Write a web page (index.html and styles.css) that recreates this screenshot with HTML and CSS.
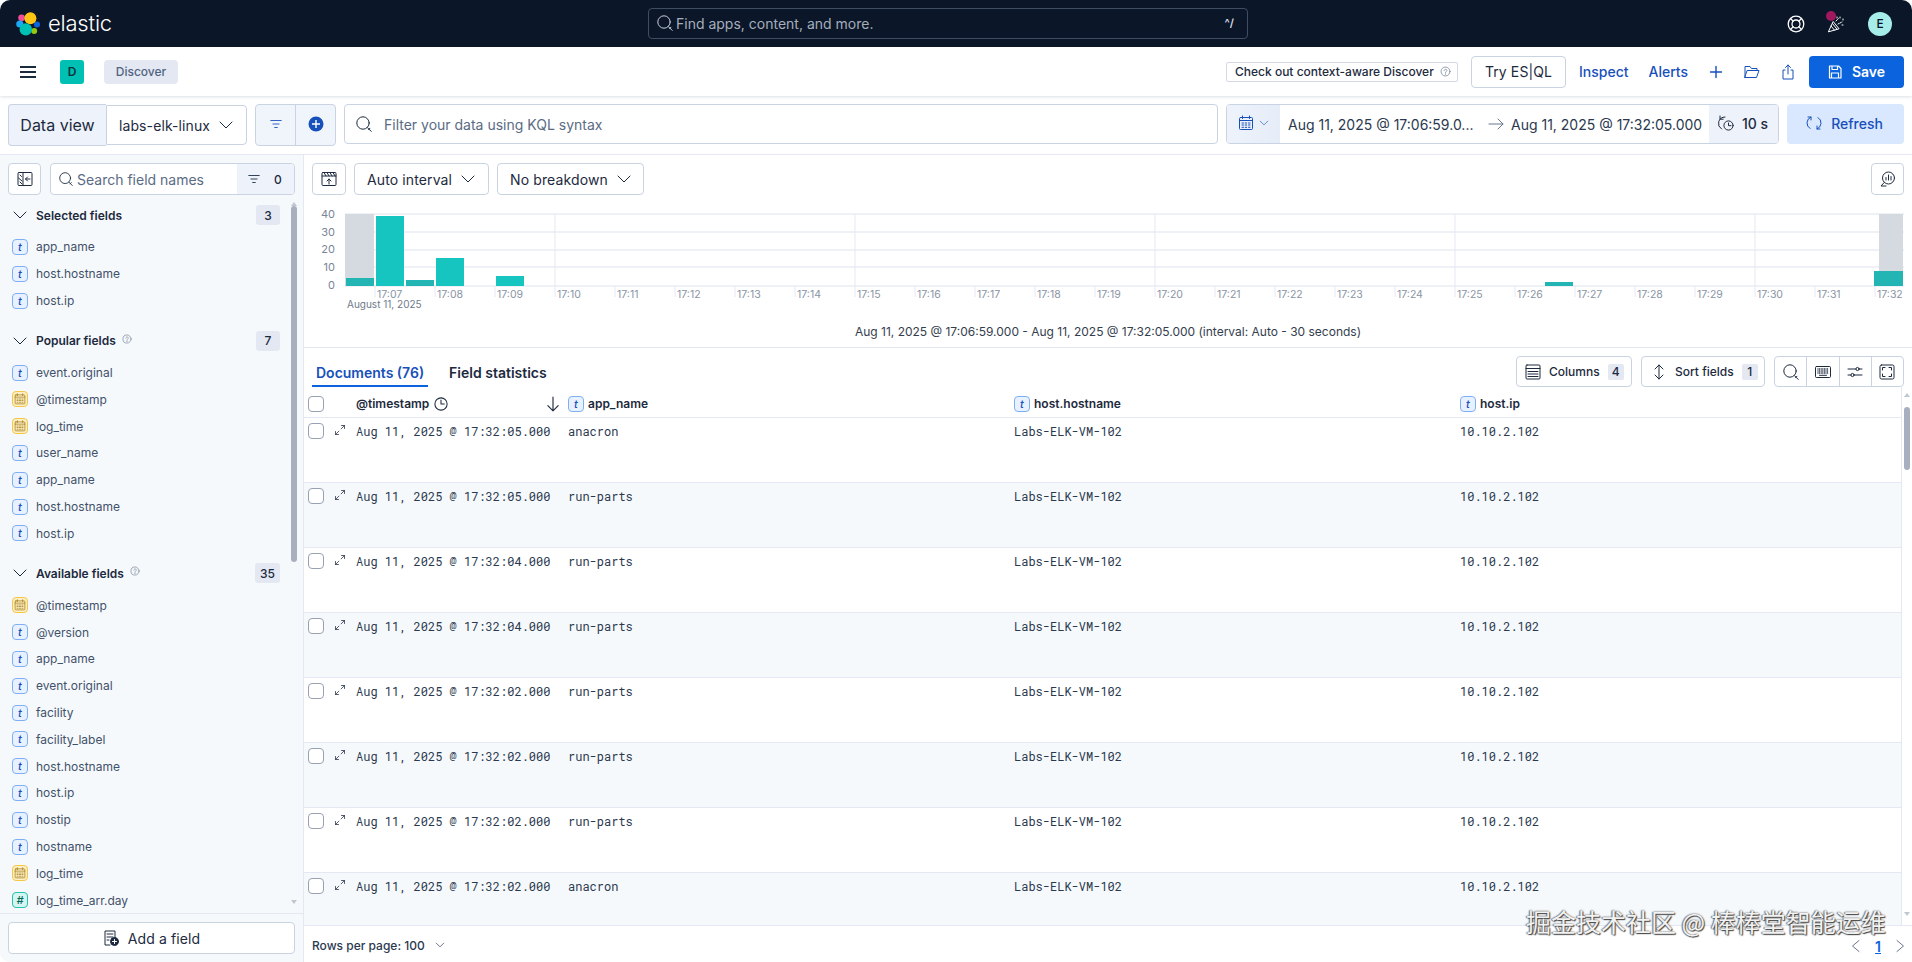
FILE: index.html
```html
<!DOCTYPE html>
<html lang="en">
<head>
<meta charset="utf-8">
<title>Discover - Elastic</title>
<link rel="stylesheet" href="styles.css">
</head>
<body>
<svg class="defs" width="0" height="0" aria-hidden="true">
  <defs>
    <symbol id="i-search" viewBox="0 0 16 16"><circle cx="7" cy="7" r="6.2"/><path d="M11.4 11.6l3.8 3.8M12.6 13.6l1.4-1.4"/></symbol>
    <symbol id="i-chev" viewBox="0 0 16 16"><path d="M2 5l6 6 6-6"/></symbol>
    <symbol id="i-filter" viewBox="0 0 16 16"><path d="M2 4h12M4.5 8h7M6.5 12h3"/></symbol>
    <symbol id="i-cal" viewBox="0 0 16 16"><rect x="1.5" y="2.5" width="13" height="12" rx="1"/><path d="M1.5 5.5h13M4.5 1v2.5M11.5 1v2.5M4 8h1.5M7.2 8h1.5M10.5 8h1.5M4 10h1.5M7.2 10h1.5M10.5 10h1.5M4 12.3h1.5M7.2 12.3h1.5M10.5 12.3h1.5"/></symbol>
    <symbol id="i-expand" viewBox="0 0 16 16"><path d="M9.5 6.5L14 2M10 2h4v4M6.5 9.5L2 14M2 10v4h4"/></symbol>
    <symbol id="i-help" viewBox="0 0 16 16"><circle cx="8" cy="8" r="6.5"/><path d="M6 6.5C6 4 10 4 10 6.5 10 8 8 8 8 9.7M8 11.2v1"/></symbol>
    <symbol id="i-clock" viewBox="0 0 16 16"><circle cx="8" cy="8" r="7"/><path d="M8 3.5V8h3.8"/></symbol>
    <symbol id="i-keyboard" viewBox="0 0 16 16"><rect x="0.5" y="2.5" width="15" height="11" rx="1"/><path d="M2.5 5h11M2.5 7h11M2.5 9h11" stroke-dasharray="1 0.6" stroke-linecap="butt" stroke-width="1.4"/><path d="M4.5 11.3h7"/></symbol>
  </defs>
</svg>
<div class="app">
  <header class="topbar">
    <div class="brand">
      <svg class="logo" viewBox="0 0 24 24" width="24" height="24" aria-hidden="true">
        <circle class="lg-pink" cx="5.6" cy="5.8" r="3.4"/>
        <circle class="lg-sky" cx="3.8" cy="12" r="3.6"/>
        <circle class="lg-blue" cx="21" cy="12.6" r="3"/>
        <circle class="lg-green" cx="18.2" cy="19" r="3"/>
        <circle class="lg-yellow" cx="14.4" cy="6.2" r="6"/>
        <circle class="lg-teal" cx="9.8" cy="17.4" r="6.2"/>
      </svg>
      <span class="wordmark">elastic</span>
    </div>
    <div class="global-search">
      <svg class="ic ic-16 ic-search-global"><use href="#i-search"/></svg>
      <span class="global-search-text">Find apps, content, and more.</span>
      <span class="shortcut">^/</span>
    </div>
    <div class="top-actions">
      <svg class="ic ic-18 ic-light ic-buoy" viewBox="0 0 18 18"><circle cx="9" cy="9" r="7.8"/><circle cx="9" cy="9" r="4"/><path d="M3.5 3.5l2.7 2.7M14.5 3.5l-2.7 2.7M3.5 14.5l2.7-2.7M14.5 14.5l-2.7-2.7"/></svg>
      <span class="party">
        <svg class="ic ic-18 ic-light" viewBox="0 0 18 18"><path d="M1.5 16.5L6.2 6.5l5.6 7z M4 11l3.5 4.2M5.5 8.5l4.3 5.5"/><path d="M9 6l3-3M11 9l4-2M13 2v1M16 4v1M15 10h1M10 2v1" stroke-dasharray="1.2 1"/></svg>
        <span class="party-dot"></span>
      </span>
      <span class="avatar">E</span>
    </div>
  </header>

  <nav class="appbar">
    <svg class="burger" viewBox="0 0 16 12" width="16" height="12"><path d="M0 1h16M0 6h16M0 11h16"/></svg>
    <span class="space-tile">D</span>
    <span class="crumb">Discover</span>
    <div class="appbar-right">
      <span class="aware-tag">Check out context-aware Discover<svg class="ic ic-11 ic-grey"><use href="#i-help"/></svg></span>
      <span class="btn-esql">Try ES|QL</span>
      <a class="nav-link nav-inspect">Inspect</a>
      <a class="nav-link nav-alerts">Alerts</a>
      <svg class="ic ic-14 ic-blue nav-plus" viewBox="0 0 14 14"><path d="M7 1.5v11M1.5 7h11"/></svg>
      <svg class="ic ic-16 ic-blue nav-folder" viewBox="0 0 16 16"><path d="M1 13.5V2.5h5l1.5 2H13v2M1 13.5h11.5l2.5-7H3.5z"/></svg>
      <svg class="ic ic-16 ic-blue nav-share" viewBox="0 0 16 16"><path d="M5 6H3v9h10V6h-2M8 10V1M5.5 3.5L8 1l2.5 2.5"/></svg>
      <span class="btn-save">
        <svg class="ic ic-14 ic-white" viewBox="0 0 14 14"><path d="M1.5 1h9l2.5 2.5V13H1.5zM4 1v3.5h5.5V1M3.5 13V8h7v5"/></svg>
        Save
      </span>
    </div>
  </nav>

  <div class="querybar">
    <div class="dv-group">
      <span class="dv-label">Data view</span>
      <span class="dv-select">labs-elk-linux<svg class="ic ic-16 ic-dark"><use href="#i-chev"/></svg></span>
    </div>
    <div class="filter-group">
      <span class="fg-cell"><svg class="ic ic-14 ic-blue"><use href="#i-filter"/></svg></span>
      <span class="fg-cell"><svg class="ic-plus" viewBox="0 0 16 16" width="16" height="16"><circle cx="8" cy="8" r="7.5"/><path d="M8 4v8M4 8h8"/></svg></span>
    </div>
    <div class="kql">
      <svg class="ic ic-16 ic-dark"><use href="#i-search"/></svg>
      <span class="kql-text">Filter your data using KQL syntax</span>
    </div>
    <div class="date-group">
      <span class="date-cal">
        <svg class="ic ic-16 ic-blue"><use href="#i-cal"/></svg>
        <svg class="ic ic-10 ic-blue"><use href="#i-chev"/></svg>
      </span>
      <span class="date-range">
        <span class="date-start">Aug 11, 2025 @ 17:06:59.0...</span>
        <svg class="ic ic-16 ic-grey date-arrow" viewBox="0 0 16 16"><path d="M1 8h14M10 3l5 5-5 5"/></svg>
        <span class="date-end">Aug 11, 2025 @ 17:32:05.000</span>
      </span>
      <span class="date-refresh">
        <svg class="ic ic-16 ic-dark" viewBox="0 0 16 16"><path d="M7 2A6.5 6.5 0 0 0 3.5 14M2 1v3.2h3.2"/><circle cx="10.5" cy="10.5" r="4.6"/><path d="M10.5 8v2.7h2.5"/></svg>
        10 s
      </span>
    </div>
    <span class="btn-refresh">
      <svg class="ic ic-16 ic-blue" viewBox="0 0 16 16"><path d="M12 2.5A6.5 6.5 0 0 1 11 14M4 13.5A6.5 6.5 0 0 1 5 2M5 5V2H2M11 11v3h3"/></svg>
      Refresh
    </span>
  </div>

  <div class="workspace">
    <aside class="sidebar">
      <div class="side-top">
        <span class="icon-btn icon-btn-side">
          <svg class="ic ic-16 ic-dark" viewBox="0 0 16 16"><rect x="1" y="1.5" width="14" height="13" rx="1"/><path d="M6 1.5v13M3 4l1.5 1.5M1.5 7L5 10M3 11l2 2M13 8H8.5M10.5 6l-2 2 2 2"/></svg>
        </span>
        <div class="side-search">
          <span class="side-search-main">
            <svg class="ic ic-14 ic-dark"><use href="#i-search"/></svg>
            <span class="side-search-text">Search field names</span>
          </span>
          <span class="side-search-filter">
            <svg class="ic ic-14 ic-dark"><use href="#i-filter"/></svg>
            <span class="count-mini">0</span>
          </span>
        </div>
      </div>
      <div class="field-list">
        <div class="section-head section-first"><svg class="ic ic-16 ic-dark"><use href="#i-chev"/></svg><span class="section-title">Selected fields</span><span class="badge">3</span></div>
        <div class="field"><span class="tok tok-t">t</span>app_name</div>
        <div class="field"><span class="tok tok-t">t</span>host.hostname</div>
        <div class="field"><span class="tok tok-t">t</span>host.ip</div>

        <div class="section-head"><svg class="ic ic-16 ic-dark"><use href="#i-chev"/></svg><span class="section-title">Popular fields</span><svg class="ic ic-10 ic-grey sec-help"><use href="#i-help"/></svg><span class="badge">7</span></div>
        <div class="field"><span class="tok tok-t">t</span>event.original</div>
        <div class="field"><span class="tok tok-d"><svg class="ic ic-12 ic-date"><use href="#i-cal"/></svg></span>@timestamp</div>
        <div class="field"><span class="tok tok-d"><svg class="ic ic-12 ic-date"><use href="#i-cal"/></svg></span>log_time</div>
        <div class="field"><span class="tok tok-t">t</span>user_name</div>
        <div class="field"><span class="tok tok-t">t</span>app_name</div>
        <div class="field"><span class="tok tok-t">t</span>host.hostname</div>
        <div class="field"><span class="tok tok-t">t</span>host.ip</div>

        <div class="section-head"><svg class="ic ic-16 ic-dark"><use href="#i-chev"/></svg><span class="section-title">Available fields</span><svg class="ic ic-10 ic-grey sec-help"><use href="#i-help"/></svg><span class="badge">35</span></div>
        <div class="field"><span class="tok tok-d"><svg class="ic ic-12 ic-date"><use href="#i-cal"/></svg></span>@timestamp</div>
        <div class="field"><span class="tok tok-t">t</span>@version</div>
        <div class="field"><span class="tok tok-t">t</span>app_name</div>
        <div class="field"><span class="tok tok-t">t</span>event.original</div>
        <div class="field"><span class="tok tok-t">t</span>facility</div>
        <div class="field"><span class="tok tok-t">t</span>facility_label</div>
        <div class="field"><span class="tok tok-t">t</span>host.hostname</div>
        <div class="field"><span class="tok tok-t">t</span>host.ip</div>
        <div class="field"><span class="tok tok-t">t</span>hostip</div>
        <div class="field"><span class="tok tok-t">t</span>hostname</div>
        <div class="field"><span class="tok tok-d"><svg class="ic ic-12 ic-date"><use href="#i-cal"/></svg></span>log_time</div>
        <div class="field"><span class="tok tok-n">#</span>log_time_arr.day</div>
        <span class="side-arrow-up"></span>
        <span class="side-thumb"></span>
        <span class="side-arrow-down"></span>
      </div>
      <div class="side-foot">
        <span class="btn-add">
          <svg class="ic ic-16 ic-dark" viewBox="0 0 16 16"><path d="M7 15H2V1h10v7M4 4h6M4 7h6M4 10h2"/><circle class="add-dot" cx="11.5" cy="11.5" r="4"/><path class="add-plus" d="M11.5 9.5v4M9.5 11.5h4"/></svg>
          Add a field
        </span>
      </div>
    </aside>

    <main class="content">
      <div class="chart-tools">
        <span class="icon-btn icon-btn-chart">
          <svg class="ic ic-16 ic-dark" viewBox="0 0 16 16"><rect x="1" y="1.5" width="14" height="13" rx="1"/><path d="M1 5h14M3 1.5L5 5M6 1.5L8 5M9 1.5L11 5M12 1.5L14 5M8 13V8M6 10l2-2 2 2"/></svg>
        </span>
        <span class="select-btn select-interval">Auto interval<svg class="ic ic-16 ic-dark"><use href="#i-chev"/></svg></span>
        <span class="select-btn select-breakdown">No breakdown<svg class="ic ic-16 ic-dark"><use href="#i-chev"/></svg></span>
        <span class="icon-btn icon-btn-ai">
          <svg class="ic ic-16 ic-dark" viewBox="0 0 16 16"><circle cx="8.5" cy="7" r="6"/><path d="M4.2 11.5L1 15h5M6 9V6.5M8.5 9V4M11 9V5.5"/></svg>
        </span>
      </div>

      <svg class="chart" viewBox="304 200 1608 118" width="1608" height="118" role="img" aria-label="Histogram of documents over time">
        <g class="grid-h">
          <path d="M345 214H1904M345 232H1904M345 250H1904M345 267H1904M345 286H1904"/>
        </g>
        <g class="grid-v">
          <path d="M555 214V286M855 214V286M1155 214V286M1455 214V286M1755 214V286"/>
        </g>
        <g class="tick">
          <path d="M375 286v11M435 286v11M495 286v11M555 286v11M615 286v11M675 286v11M735 286v11M795 286v11M855 286v11M915 286v11M975 286v11M1035 286v11M1095 286v11M1155 286v11M1215 286v11M1275 286v11M1335 286v11M1395 286v11M1455 286v11M1515 286v11M1575 286v11M1635 286v11M1695 286v11M1755 286v11M1815 286v11M1875 286v11"/>
        </g>
        <rect class="bar-shade" x="345" y="214" width="29" height="72"/>
        <rect class="bar-shade" x="1879" y="214" width="24" height="72"/>
        <rect class="bar-dim" x="346" y="278" width="28" height="8"/>
        <rect class="bar" x="376" y="216" width="28" height="70"/>
        <rect class="bar-dim" x="406" y="280" width="28" height="6"/>
        <rect class="bar" x="436" y="258" width="28" height="28"/>
        <rect class="bar" x="496" y="276" width="28" height="10"/>
        <rect class="bar-dim" x="1545" y="282" width="28" height="4"/>
        <rect class="bar-dim" x="1874" y="271" width="29" height="15"/>
        <g class="y-labels">
          <text x="335" y="218">40</text>
          <text x="335" y="236">30</text>
          <text x="335" y="253">20</text>
          <text x="335" y="271">10</text>
          <text x="335" y="289">0</text>
        </g>
        <g class="x-labels">
          <text x="377" y="298">17:07</text><text x="437" y="298">17:08</text><text x="497" y="298">17:09</text><text x="557" y="298">17:10</text><text x="617" y="298">17:11</text><text x="677" y="298">17:12</text><text x="737" y="298">17:13</text><text x="797" y="298">17:14</text><text x="857" y="298">17:15</text><text x="917" y="298">17:16</text><text x="977" y="298">17:17</text><text x="1037" y="298">17:18</text><text x="1097" y="298">17:19</text><text x="1157" y="298">17:20</text><text x="1217" y="298">17:21</text><text x="1277" y="298">17:22</text><text x="1337" y="298">17:23</text><text x="1397" y="298">17:24</text><text x="1457" y="298">17:25</text><text x="1517" y="298">17:26</text><text x="1577" y="298">17:27</text><text x="1637" y="298">17:28</text><text x="1697" y="298">17:29</text><text x="1757" y="298">17:30</text><text x="1817" y="298">17:31</text><text x="1877" y="298">17:32</text>
          <text class="x-date" x="347" y="308">August 11, 2025</text>
        </g>
      </svg>
      <div class="chart-caption">Aug 11, 2025 @ 17:06:59.000 - Aug 11, 2025 @ 17:32:05.000 (interval: Auto - 30 seconds)</div>

      <div class="tabs-row">
        <span class="tab tab-active">Documents (76)</span>
        <span class="tab">Field statistics</span>
        <div class="grid-tools">
          <span class="tool-btn tool-columns">
            <svg class="ic ic-16 ic-dark" viewBox="0 0 16 16"><rect x="1" y="1" width="14" height="14" rx="1"/><path d="M1 4.5h14M3 7.5h10M3 10h10M3 12.5h10" /></svg>
            Columns<span class="tool-count">4</span>
          </span>
          <span class="tool-btn tool-sort">
            <svg class="ic ic-16 ic-dark" viewBox="0 0 16 16"><path d="M8 1v14M4 5l4-4 4 4M4 11l4 4 4-4"/></svg>
            Sort fields<span class="tool-count">1</span>
          </span>
          <div class="tool-group">
            <span class="tool-cell"><svg class="ic ic-16 ic-dark"><use href="#i-search"/></svg></span>
            <span class="tool-cell"><svg class="ic ic-16 ic-dark"><use href="#i-keyboard"/></svg></span>
            <span class="tool-cell"><svg class="ic ic-16 ic-dark" viewBox="0 0 16 16"><path d="M1 5h8M12 5h3M1 11h3M7 11h8"/><circle cx="10.5" cy="5" r="1.6"/><circle cx="5.5" cy="11" r="1.6"/></svg></span>
            <span class="tool-cell"><svg class="ic ic-16 ic-dark" viewBox="0 0 16 16"><rect x="1" y="1" width="14" height="14" rx="1.5"/><path d="M3.5 6V3.5H6M10 3.5h2.5V6M12.5 10v2.5H10M6 12.5H3.5V10"/></svg></span>
          </div>
        </div>
      </div>

      <div class="table">
        <div class="row row-head">
          <span class="cell-check"><span class="check"></span></span>
          <span></span>
          <span class="th th-time">@timestamp<svg class="ic ic-14 ic-dark ic-clock"><use href="#i-clock"/></svg><svg class="ic ic-16 ic-dark th-sort" viewBox="0 0 14 14"><path d="M7 1v12M2.5 8.5L7 13l4.5-4.5"/></svg></span>
          <span class="th"><span class="tok tok-t">t</span>app_name</span>
          <span class="th"><span class="tok tok-t">t</span>host.hostname</span>
          <span class="th"><span class="tok tok-t">t</span>host.ip</span>
        </div>
        <div class="row">
          <span class="cell-check"><span class="check"></span></span><span class="cell-exp"><svg class="ic ic-12 ic-dark"><use href="#i-expand"/></svg></span>
          <span class="td">Aug 11, 2025 @ 17:32:05.000</span><span class="td">anacron</span><span class="td">Labs-ELK-VM-102</span><span class="td">10.10.2.102</span>
        </div>
        <div class="row row-alt">
          <span class="cell-check"><span class="check"></span></span><span class="cell-exp"><svg class="ic ic-12 ic-dark"><use href="#i-expand"/></svg></span>
          <span class="td">Aug 11, 2025 @ 17:32:05.000</span><span class="td">run-parts</span><span class="td">Labs-ELK-VM-102</span><span class="td">10.10.2.102</span>
        </div>
        <div class="row">
          <span class="cell-check"><span class="check"></span></span><span class="cell-exp"><svg class="ic ic-12 ic-dark"><use href="#i-expand"/></svg></span>
          <span class="td">Aug 11, 2025 @ 17:32:04.000</span><span class="td">run-parts</span><span class="td">Labs-ELK-VM-102</span><span class="td">10.10.2.102</span>
        </div>
        <div class="row row-alt">
          <span class="cell-check"><span class="check"></span></span><span class="cell-exp"><svg class="ic ic-12 ic-dark"><use href="#i-expand"/></svg></span>
          <span class="td">Aug 11, 2025 @ 17:32:04.000</span><span class="td">run-parts</span><span class="td">Labs-ELK-VM-102</span><span class="td">10.10.2.102</span>
        </div>
        <div class="row">
          <span class="cell-check"><span class="check"></span></span><span class="cell-exp"><svg class="ic ic-12 ic-dark"><use href="#i-expand"/></svg></span>
          <span class="td">Aug 11, 2025 @ 17:32:02.000</span><span class="td">run-parts</span><span class="td">Labs-ELK-VM-102</span><span class="td">10.10.2.102</span>
        </div>
        <div class="row row-alt">
          <span class="cell-check"><span class="check"></span></span><span class="cell-exp"><svg class="ic ic-12 ic-dark"><use href="#i-expand"/></svg></span>
          <span class="td">Aug 11, 2025 @ 17:32:02.000</span><span class="td">run-parts</span><span class="td">Labs-ELK-VM-102</span><span class="td">10.10.2.102</span>
        </div>
        <div class="row">
          <span class="cell-check"><span class="check"></span></span><span class="cell-exp"><svg class="ic ic-12 ic-dark"><use href="#i-expand"/></svg></span>
          <span class="td">Aug 11, 2025 @ 17:32:02.000</span><span class="td">run-parts</span><span class="td">Labs-ELK-VM-102</span><span class="td">10.10.2.102</span>
        </div>
        <div class="row row-alt">
          <span class="cell-check"><span class="check"></span></span><span class="cell-exp"><svg class="ic ic-12 ic-dark"><use href="#i-expand"/></svg></span>
          <span class="td">Aug 11, 2025 @ 17:32:02.000</span><span class="td">anacron</span><span class="td">Labs-ELK-VM-102</span><span class="td">10.10.2.102</span>
        </div>
        <span class="tbl-arrow-up"></span>
        <span class="tbl-thumb"></span>
        <span class="tbl-arrow-down"></span>
      </div>

      <div class="pager">
        <span class="rows-per">Rows per page: 100<svg class="ic ic-10 ic-dark"><use href="#i-chev"/></svg></span>
        <span class="pages">
          <svg class="ic ic-14 ic-grey" viewBox="0 0 14 14"><path d="M10 1.5L3.5 7l6.5 5.5"/></svg>
          <a class="page-num">1</a>
          <svg class="ic ic-14 ic-grey" viewBox="0 0 14 14"><path d="M4 1.5L10.5 7 4 12.5"/></svg>
        </span>
      </div>
    </main>
  </div>
  <div class="watermark">掘金技术社区 @ 棒棒堂智能运维</div>
</div>
</body>
</html>
```
FILE: styles.css
```css
* { box-sizing: border-box; }
html, body { margin: 0; padding: 0; height: 100%; background: #fff; overflow: hidden; }
body { font-family: Inter, "Noto Sans", sans-serif; color: #1d2a3e; font-size: 14px; }
.defs { position: absolute; }
.app { position: relative; width: 1912px; height: 962px; display: flex; flex-direction: column; overflow: hidden; border-radius: 10px; background: #fff; }

.ic { fill: none; stroke: currentColor; stroke-width: 1; flex: none; stroke-linecap: round; stroke-linejoin: round; }
.ic-10 { width: 10px; height: 10px; }
.ic-11 { width: 11px; height: 11px; }
.ic-12 { width: 12px; height: 12px; }
.ic-14 { width: 14px; height: 14px; }
.ic-16 { width: 16px; height: 16px; }
.ic-18 { width: 18px; height: 18px; }
.ic-dark { color: #1d2a3e; }
.ic-grey { color: #69768c; }
.ic-blue { color: #1750ba; }
.ic-white { color: #fff; stroke-width: 1.2; }
.ic-light { color: #fff; }
.ic-date { color: #a37a12; }

/* top bar */
.topbar { height: 47px; flex: none; background: #0b1628; display: flex; align-items: center; position: relative; }
.brand { width: 648px; flex: none; display: flex; align-items: center; gap: 8px; padding-left: 16px; }
.logo .lg-pink { fill: #f04e98; }
.logo .lg-sky { fill: #1ba9f5; }
.logo .lg-blue { fill: #0b64dd; }
.logo .lg-green { fill: #93c90e; }
.logo .lg-yellow { fill: #fec514; }
.logo .lg-teal { fill: #00bfb3; }
.wordmark { color: #fff; font-size: 22px; font-weight: 300; letter-spacing: -0.2px; line-height: 24px; margin-top: -1px; }
.global-search { width: 600px; height: 31px; margin-top: -1px; border: 1px solid #3f4d63; border-radius: 4px; display: flex; align-items: center; padding: 0 8px; gap: 3px; color: #b0b9c7; }
.global-search-text { font-size: 14px; flex: 1; color: #a4aebd; }
.ic-search-global { color: #c9d1dc; }
.shortcut { font-size: 11px; color: #d6dbe3; font-weight: 600; padding-right: 5px; }
.top-actions { flex: 1; display: flex; align-items: center; justify-content: flex-end; padding-right: 20px; }
.ic-buoy { margin-right: 22px; stroke-width: 1.3; }
.party { position: relative; display: inline-flex; margin-right: 23px; }
.party-dot { position: absolute; left: -1px; top: -4px; width: 10px; height: 10px; border-radius: 50%; background: #a0195f; }
.avatar { width: 24px; height: 24px; border-radius: 50%; background: #a6edea; color: #07101f; font-size: 12px; font-weight: 500; display: flex; align-items: center; justify-content: center; }

/* app bar */
.appbar { height: 49px; flex: none; display: flex; align-items: center; background: #fff; box-shadow: 0 1px 3px rgba(40,60,90,.16); position: relative; z-index: 2; padding-left: 20px; }
.burger { fill: none; stroke: #1d2a3e; stroke-width: 2; flex: none; }
.space-tile { width: 24px; height: 24px; margin-left: 24px; border-radius: 3px; background: #00bfb3; color: #07323a; font-size: 12px; font-weight: 600; display: flex; align-items: center; justify-content: center; }
.crumb { margin-left: 20px; height: 24px; width: 74px; border-radius: 4px; background: #e3e8f2; color: #516381; font-size: 12px; font-weight: 500; display: flex; align-items: center; justify-content: center; }
.appbar-right { margin-left: auto; display: flex; align-items: center; padding-right: 8px; }
.aware-tag { width: 232px; height: 20px; border: 1px solid #d3dae6; border-radius: 2px; font-size: 12px; font-weight: 500; color: #1d2a3e; display: flex; align-items: center; padding-left: 8px; gap: 6px; white-space: nowrap; }
.btn-esql { width: 95px; height: 32px; margin-left: 13px; border: 1px solid #cad3e2; border-radius: 4px; font-size: 14px; font-weight: 400; letter-spacing: .1px; display: flex; align-items: center; justify-content: center; }
.nav-link { color: #1750ba; font-size: 14px; font-weight: 500; }
.nav-inspect { margin-left: 13px; }
.nav-alerts { margin-left: 20px; }
.nav-plus { margin-left: 21px; stroke-width: 1.4; }
.nav-folder { margin-left: 21px; }
.nav-share { margin-left: 20px; }
.btn-save { width: 95px; height: 32px; margin-left: 13px; border-radius: 4px; background: #0b64dd; color: #fff; font-size: 14px; font-weight: 600; display: flex; align-items: center; justify-content: center; gap: 10px; }

/* query bar */
.querybar { height: 59px; flex: none; padding: 8px 8px 0; display: flex; align-items: flex-start; border-bottom: 1px solid #e3e8f2; background: #fff; }
.dv-group { display: flex; align-items: center; height: 42px; }
.dv-label { width: 98px; height: 42px; background: #eef3fb; border: 1px solid #cad3e2; border-right: 0; border-radius: 4px 0 0 4px; font-size: 16px; display: flex; align-items: center; justify-content: center; color: #1d2a3e; }
.dv-select { width: 141px; height: 40px; border: 1px solid #cad3e2; border-radius: 0 4px 4px 0; font-size: 14px; font-weight: 400; letter-spacing: .1px; display: flex; align-items: center; padding-left: 12px; gap: 8px; }
.filter-group { margin-left: 8px; width: 81px; height: 42px; border: 1px solid #cad3e2; border-radius: 4px; background: #f0f5fc; display: flex; }
.fg-cell { flex: 1; display: flex; align-items: center; justify-content: center; padding-bottom: 2px; }
.fg-cell + .fg-cell { border-left: 1px solid #cad3e2; }
.ic-plus circle { fill: #1750ba; }
.ic-plus path { stroke: #fff; stroke-width: 1.4; fill: none; }
.kql { margin-left: 8px; width: 874px; height: 40px; border: 1px solid #cad3e2; border-radius: 4px; display: flex; align-items: center; padding-left: 11px; gap: 12px; }
.kql-text { font-size: 14px; color: #5a6b84; }
.date-group { margin-left: 8px; width: 553px; height: 40px; border: 1px solid #cad3e2; border-radius: 4px; display: flex; overflow: hidden; }
.date-cal { width: 53px; background: linear-gradient(90deg, #eef3fb, #e6edf8); display: flex; align-items: center; justify-content: center; gap: 5px; padding-bottom: 2px; }
.date-range { flex: 1; display: flex; align-items: center; padding-left: 8px; font-size: 14px; color: #2b394f; white-space: nowrap; }
.date-start { width: 185px; }
.date-arrow { margin-left: 15px; }
.date-end { margin-left: 7px; }
.date-refresh { width: 69px; background: #eef3fb; display: flex; align-items: center; gap: 8px; padding-left: 9px; font-size: 14px; font-weight: 500; padding-bottom: 2px; }
.btn-refresh { margin-left: 8px; width: 117px; height: 40px; border-radius: 4px; background: #d9e8ff; color: #1750ba; font-size: 14px; font-weight: 500; display: flex; align-items: center; justify-content: center; gap: 9px; padding-bottom: 2px; padding-right: 2px; }

/* sidebar */
.workspace { flex: 1; display: flex; min-height: 0; }
.sidebar { width: 304px; flex: none; background: #f6f9fc; border-right: 1px solid #e3e8f2; display: flex; flex-direction: column; }
.side-top { display: flex; padding: 8px 8px 0; gap: 9px; }
.icon-btn { width: 33px; height: 32px; border: 1px solid #cad3e2; border-radius: 4px; background: #fff; display: flex; align-items: center; justify-content: center; flex: none; }
.side-search { width: 245px; height: 32px; border: 1px solid #cad3e2; border-radius: 4px; background: #fff; display: flex; overflow: hidden; }
.side-search-main { flex: 1; display: flex; align-items: center; padding-left: 8px; gap: 4px; }
.side-search-text { font-size: 14px; color: #5a6b84; }
.side-search-filter { width: 57px; background: #eef3fb; display: flex; align-items: center; gap: 13px; padding-left: 10px; }
.count-mini { font-size: 12px; font-weight: 500; }
.field-list { position: relative; flex: 1; overflow: hidden; padding-top: 7px; min-height: 0; }
.section-head { height: 26px; margin-top: 13.6px; margin-bottom: 5.6px; display: flex; align-items: center; padding: 0 23px 0 12px; font-size: 12px; }
.section-first { margin-top: 0; }
.section-title { margin-left: 8px; font-weight: 600; color: #1d2a3e; }
.sec-help { margin-left: 6px; margin-top: -4px; }
.badge { margin-left: auto; min-width: 24px; height: 20px; padding: 0 5px; background: #e3e8f2; border-radius: 3px; font-size: 12px; font-weight: 500; display: flex; align-items: center; justify-content: center; }
.field { height: 26.8px; display: flex; align-items: center; padding-left: 12px; gap: 8px; font-size: 12px; color: #42516a; }
.tok { width: 16px; height: 16px; border-radius: 4px; border: 1px solid; display: inline-flex; align-items: center; justify-content: center; font-size: 11px; font-style: italic; font-weight: 500; flex: none; }
.tok-t { background: #e8f1ff; border-color: #7fb0f5; color: #1750ba; }
.tok-d { background: #fdf0c9; border-color: #f5c742; }
.tok-n { background: #d7f5f0; border-color: #24c2b0; color: #00695c; }
.side-thumb { position: absolute; left: 291px; top: 11px; width: 6px; height: 356px; background: #a8b0c0; border-radius: 3px; }
.side-arrow-up { position: absolute; left: 291px; top: 4px; width: 0; height: 0; border: 3px solid transparent; border-bottom: 4px solid #c0c6d2; }
.side-arrow-down { position: absolute; left: 291px; bottom: 6px; width: 0; height: 0; border: 3px solid transparent; border-top: 4px solid #c0c6d2; }
.side-foot { height: 49px; flex: none; border-top: 1px solid #e3e8f2; padding: 8px 8px 0; background: #f6f9fc; }
.btn-add { width: 287px; height: 32px; border: 1px solid #cad3e2; border-radius: 4px; background: #fff; display: flex; align-items: center; justify-content: center; gap: 9px; font-size: 14px; font-weight: 400; letter-spacing: .1px; }
.add-dot { fill: #1d2a3e; stroke: #1d2a3e; }
.add-plus { stroke: #fff; }

/* main */
.content { flex: 1; min-width: 0; display: flex; flex-direction: column; }
.chart-tools { display: flex; padding: 8px 8px 0; gap: 8px; height: 45px; flex: none; }
.icon-btn-chart { width: 34px; }
.icon-btn-ai { margin-left: auto; }
.select-btn { height: 32px; border: 1px solid #cad3e2; border-radius: 4px; display: flex; align-items: center; font-size: 14px; font-weight: 400; letter-spacing: .12px; padding-left: 12px; gap: 8px; }
.select-interval { width: 135px; }
.select-breakdown { width: 147px; }
.chart { display: block; flex: none; }
.grid-h path { stroke: #eef1f6; stroke-width: 2; fill: none; }
.grid-v path { stroke: #e4e9f1; stroke-width: 1; fill: none; }
.tick path { stroke: #e4e9f1; stroke-width: 1; fill: none; }
.bar { fill: #16c5c0; }
.bar-dim { fill: #22b5b3; }
.bar-shade { fill: #d5d9e0; }
.y-labels text { font-size: 11px; fill: #7a8596; text-anchor: end; }
.x-labels text { font-size: 10.5px; fill: #8a94a3; }
.x-labels .x-date { font-size: 10px; fill: #6f7a8b; }
.chart-caption { height: 30px; flex: none; text-align: center; font-size: 12px; color: #343d4d; padding-top: 6px; border-bottom: 1px solid #e3e8f2; line-height: 16px; }

.tabs-row { height: 39px; flex: none; display: flex; align-items: flex-start; padding: 0 8px; position: relative; }
.tab { height: 39px; padding: 16px 4px 0; line-height: 18px; font-size: 14px; font-weight: 600; margin-right: 20px; white-space: nowrap; }
.tab-active { color: #1750ba; border-bottom: 2px solid #0b64dd; margin-right: 17px; }
.grid-tools { margin-left: auto; display: flex; gap: 9px; padding-top: 8px; }
.tool-btn { height: 31px; border: 1px solid #cad3e2; border-radius: 4px; display: flex; align-items: center; font-size: 12px; font-weight: 500; padding-left: 8px; }
.tool-btn .ic { margin-right: 8px; }
.tool-columns { width: 116px; }
.tool-sort { width: 124px; padding-left: 9px; }
.tool-count { margin-left: 8px; width: 16px; height: 16px; background: #e3e8f2; border-radius: 2px; display: flex; align-items: center; justify-content: center; }
.tool-group { display: flex; width: 130px; height: 31px; border: 1px solid #cad3e2; border-radius: 4px; }
.tool-cell { flex: 1; display: flex; align-items: center; justify-content: center; }
.tool-cell + .tool-cell { border-left: 1px solid #cad3e2; }

/* table */
.table { position: relative; flex: 1; overflow: hidden; min-height: 0; border-right: 0; }
.row { width: 1598px; height: 65px; display: grid; grid-template-columns: 30px 22px 212px 446px 446px 1fr; border-bottom: 1px solid #e3e8f2; border-right: 1px solid #e3e8f2; padding-top: 5px; }
.row-alt { background: #f6f9fc; }
.row-head { height: 31px; align-items: center; padding-top: 3px; }
.cell-check { padding-left: 4px; }
.check { display: block; width: 16px; height: 16px; border: 1px solid #98a2b3; border-radius: 4px; background: #fff; }
.cell-exp { display: flex; padding-top: 1px; }
.td { font-family: "Roboto Mono", "Liberation Mono", "DejaVu Sans Mono", monospace; font-size: 12px; color: #2b394f; line-height: 16px; }
.th { display: flex; align-items: center; gap: 4px; font-size: 12px; font-weight: 600; color: #1d2a3e; }
.th-time { gap: 4px; }
.ic-clock { stroke-width: 1.2; margin-left: 1px; }
.th-sort { margin-left: auto; margin-right: 7px; }
.tbl-thumb { position: absolute; right: 2px; top: 20px; width: 6px; height: 63px; background: #a8b0c0; border-radius: 3px; }
.tbl-arrow-up { position: absolute; right: 2px; top: 3px; width: 0; height: 0; border: 3px solid transparent; border-bottom: 4px solid #c0c6d2; }
.tbl-arrow-down { position: absolute; right: 2px; bottom: 6px; width: 0; height: 0; border: 3px solid transparent; border-top: 4px solid #c0c6d2; }
.pager { height: 37px; flex: none; border-top: 1px solid #e3e8f2; display: flex; align-items: center; justify-content: space-between; padding: 2px 5px 0 8px; font-size: 12px; }
.rows-per { display: inline-flex; align-items: center; gap: 10px; font-weight: 500; color: #2b394f; }
.pages { display: inline-flex; align-items: center; gap: 12px; padding-top: 2px; }
.page-num { color: #0b64dd; font-weight: 600; font-size: 14px; text-decoration: underline; }

.watermark { position: absolute; left: 1526px; top: 904px; font-family: "Noto Sans CJK SC", sans-serif; font-size: 25px; line-height: 34px; color: #f2f2f2; white-space: nowrap; text-shadow: 1px 1px 1px #444, -1px 0 1px #777, 0 0 2px #555; }
```
